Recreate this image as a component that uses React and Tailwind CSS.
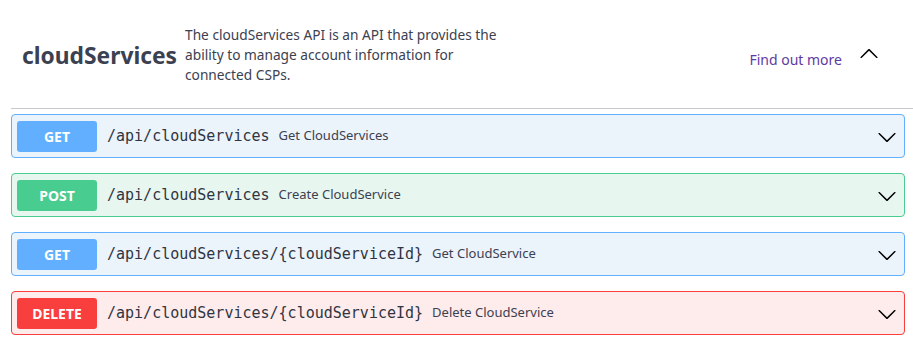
import React from "react";

const ops = [
  { method: "GET", path: "/api/cloudServices", summary: "Get CloudServices", box: "bg-[#ebf3fb] border-[#61affe]", badge: "bg-[#61affe]" },
  { method: "POST", path: "/api/cloudServices", summary: "Create CloudService", box: "bg-[#e8f6f0] border-[#49cc90]", badge: "bg-[#49cc90]" },
  { method: "GET", path: "/api/cloudServices/{cloudServiceId}", summary: "Get CloudService", box: "bg-[#ebf3fb] border-[#61affe]", badge: "bg-[#61affe]" },
  { method: "DELETE", path: "/api/cloudServices/{cloudServiceId}", summary: "Delete CloudService", box: "bg-[#feebeb] border-[#f93e3e]", badge: "bg-[#f93e3e]" },
];

function Arrow({ up }) {
  return (
    <svg width="20" height="20" viewBox="0 0 20 20" className={up ? "rotate-180" : ""}>
      <path
        fill="#000"
        d="M17.418 6.109c.272-.268.709-.268.979 0s.271.701 0 .969l-7.908 7.83c-.27.268-.707.268-.979 0l-7.908-7.83c-.27-.268-.27-.701 0-.969.271-.268.709-.268.979 0L10 13.25l7.418-7.141z"
      />
    </svg>
  );
}

export default function App() {
  return (
    <div className="w-[913px] h-[342px] bg-white overflow-hidden text-[#3b4151]" style={{ fontFamily: '"Noto Sans", sans-serif' }}>
      <div className="pl-[11px]">
        <div className="flex items-center h-[109px] border-b border-[#c8c9cc]">
          <h3 className="pl-[11px] text-[22.8px] font-bold leading-none text-[#3b4151] mt-[4px]">cloudServices</h3>
          <div className="ml-[8px] text-[13.7px] leading-[20px] text-[#3b4151] mt-[2px]">
            The cloudServices API is an API that provides the<br />
            ability to manage account information for<br />
            connected CSPs.
          </div>
          <div className="ml-auto flex items-center mr-[34px]">
            <span className="text-[14px] text-[#5e3a9f] mt-[10px]">Find out more</span>
            <span className="ml-[17px] mt-[0px]"><Arrow up /></span>
          </div>
        </div>
        <div className="flex flex-col gap-[15px] pt-[5px] mr-[8px]">
          {ops.map((op, i) => (
            <div key={i} className={`flex items-center h-[44px] border rounded-[4px] px-[5px] ${op.box}`}>
              <span className={`w-[80px] h-[31px] rounded-[3px] flex items-center justify-center text-white text-[14px] font-bold ${op.badge}`}>
                {op.method}
              </span>
              <span className="pl-[10px] pr-[9px] text-[15px] text-[#2f3442]" style={{ fontFamily: '"DejaVu Sans Mono", monospace' }}>
                {op.path}
              </span>
              <span className="text-[13px] text-[#3b4151]">{op.summary}</span>
              <span className="ml-auto mr-[2px] mt-[2px]"><Arrow /></span>
            </div>
          ))}
        </div>
      </div>
    </div>
  );
}
